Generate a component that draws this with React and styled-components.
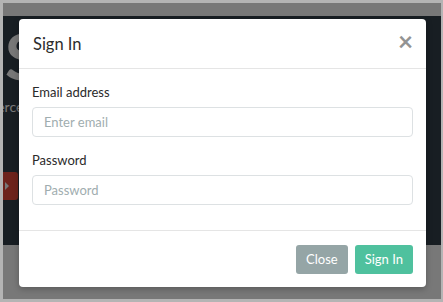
import React from "react";
import styled, { createGlobalStyle } from "styled-components";

const Global = createGlobalStyle`
  html, body {
    margin: 0;
    padding: 0;
    background: #fff;
  }
  * {
    box-sizing: border-box;
  }
`;

const Frame = styled.div`
  position: relative;
  width: 443px;
  height: 302px;
  border: 3px solid #b4b4b4;
  border-right-width: 2px;
  overflow: hidden;
  background: #fff;
  font-family: Lato, "Open Sans", sans-serif;
`;

const TopStrip = styled.div`
  height: 13px;
  background: #fff;
`;

const Hero = styled.section`
  height: 229px;
  background: #34404c;
  display: flex;
  flex-direction: column;
  padding-top: 8px;
  overflow: hidden;
`;

const BigTitle = styled.h1`
  margin: 0;
  padding-left: 2px;
  font-size: 64px;
  line-height: 64px;
  font-weight: 700;
  color: #fff;
`;

const Lead = styled.p`
  margin: 10px 0 0 -46px;
  font-size: 14px;
  line-height: 18px;
  color: #fff;
  white-space: nowrap;
`;

const HeroButton = styled.div`
  margin-top: 56px;
  width: 15px;
  height: 28px;
  background: #e74c3c;
  border-radius: 0 3px 3px 0;
  display: flex;
  align-items: center;
  padding-left: 2px;
  &::after {
    content: "";
    border-left: 4px solid #fff;
    border-top: 4px solid transparent;
    border-bottom: 4px solid transparent;
  }
`;

const Backdrop = styled.div`
  position: absolute;
  inset: 0;
  background: rgba(0, 0, 0, 0.53);
`;

const Modal = styled.div`
  position: absolute;
  left: 16px;
  top: 16px;
  width: 407px;
  height: 268px;
  background: #fff;
  border-radius: 4px;
  display: flex;
  flex-direction: column;
  box-shadow: 0 2px 6px rgba(0, 0, 0, 0.25);
`;

const Header = styled.div`
  height: 50px;
  display: flex;
  align-items: center;
  justify-content: space-between;
  padding: 0 13px 0 14px;
  border-bottom: 1px solid #e5e5e5;
`;

const Title = styled.h4`
  margin: 0;
  font-size: 16.5px;
  font-weight: 400;
  color: #2c2c2c;
`;

const CloseX = styled.button`
  border: none;
  background: transparent;
  padding: 0;
  font-family: Lato, sans-serif;
  font-size: 26px;
  font-weight: 700;
  line-height: 1;
  color: #939393;
  margin-top: -6px;
`;

const Body = styled.div`
  flex: 1;
  padding: 14px 13px 0 13px;
  border-bottom: 1px solid #e5e5e5;
`;

const Field = styled.div`
  display: flex;
  flex-direction: column;
  margin-bottom: ${(p) => (p.$last ? 0 : 14)}px;
`;

const Label = styled.label`
  font-size: 13px;
  line-height: 18px;
  color: #2a2a2a;
  margin-bottom: 6px;
`;

const Input = styled.input`
  height: 30px;
  border: 1px solid #dde1e3;
  border-radius: 4px;
  padding: 0 11px;
  font-family: Lato, sans-serif;
  font-size: 13px;
  &::placeholder {
    color: #9fadaf;
  }
`;

const Footer = styled.div`
  height: 56px;
  display: flex;
  align-items: center;
  justify-content: flex-end;
  gap: 7px;
  padding-right: 13px;
`;

const Button = styled.button`
  height: 29px;
  padding: 0 10px;
  border: none;
  border-radius: 3px;
  font-family: Lato, sans-serif;
  font-size: 13px;
  color: #fff;
  background: ${(p) => (p.$primary ? "#4fc19e" : "#95a5a6")};
`;

export default function App() {
  return (
    <>
      <Global />
      <Frame>
        <TopStrip />
        <Hero>
          <BigTitle>S</BigTitle>
          <Lead>Commerce made simple</Lead>
          <HeroButton />
        </Hero>
        <Backdrop />
        <Modal>
          <Header>
            <Title>Sign In</Title>
            <CloseX>×</CloseX>
          </Header>
          <Body>
            <Field>
              <Label>Email address</Label>
              <Input placeholder="Enter email" />
            </Field>
            <Field $last>
              <Label>Password</Label>
              <Input type="password" placeholder="Password" />
            </Field>
          </Body>
          <Footer>
            <Button>Close</Button>
            <Button $primary>Sign In</Button>
          </Footer>
        </Modal>
      </Frame>
    </>
  );
}
